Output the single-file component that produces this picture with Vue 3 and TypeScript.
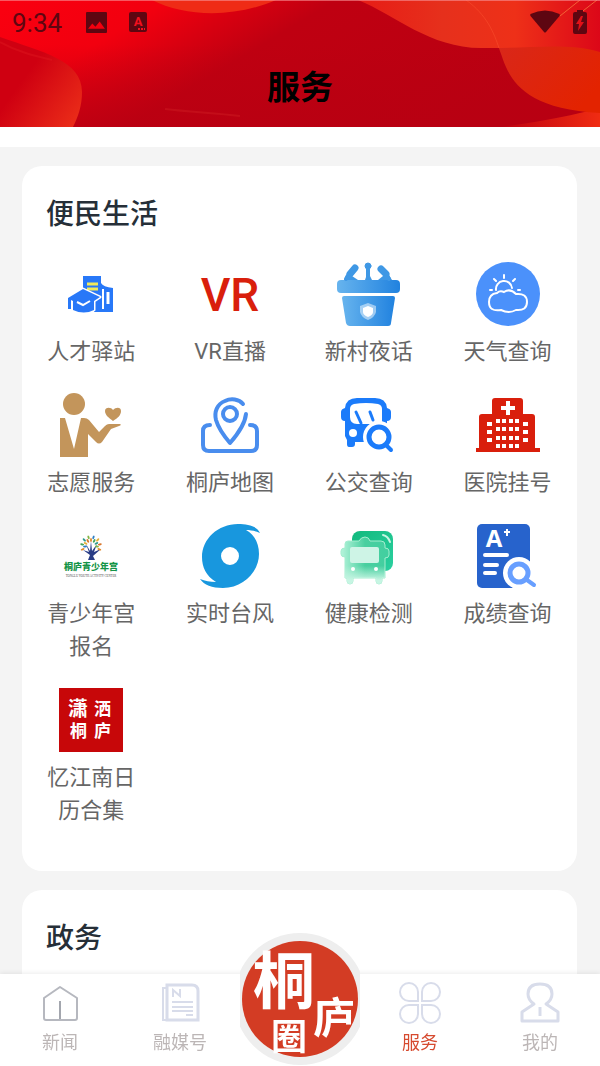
<script setup lang="ts">
interface Service { id: string; label: string }
interface Tab { id: string; label: string; active?: boolean }

const services: Service[] = [
  { id: 'talent', label: '人才驿站' },
  { id: 'vr', label: 'VR直播' },
  { id: 'podium', label: '新村夜话' },
  { id: 'weather', label: '天气查询' },
  { id: 'volunteer', label: '志愿服务' },
  { id: 'map', label: '桐庐地图' },
  { id: 'bus', label: '公交查询' },
  { id: 'hospital', label: '医院挂号' },
  { id: 'youth', label: '青少年宫报名' },
  { id: 'typhoon', label: '实时台风' },
  { id: 'health', label: '健康检测' },
  { id: 'grades', label: '成绩查询' },
  { id: 'calendar', label: '忆江南日历合集' },
]

const tabs: Tab[] = [
  { id: 'news', label: '新闻' },
  { id: 'media', label: '融媒号' },
  { id: 'circle', label: '' },
  { id: 'service', label: '服务', active: true },
  { id: 'me', label: '我的' },
]

const leafColors = ['#e08a2c', '#2f7fc4', '#46a35a', '#e5b03a', '#2f9a8c', '#d9772c', '#7fb544']
const leaves = Array.from({ length: 15 }, (_, i) => {
  const outer = i % 2 === 0
  const angle = Math.PI * (1.12 - (i / 14) * 1.24)
  const r = outer ? 9 : 6
  return {
    x: 32 + r * Math.cos(angle),
    y: 22 - r * Math.sin(angle),
    rot: 90 - (angle * 180) / Math.PI,
    fill: leafColors[i % leafColors.length],
  }
})

const centreWindows = [26, 34, 43, 51].flatMap((y) => [20, 26, 33, 39].map((x) => ({ x, y })))
const sideWindows = [29, 37, 45].flatMap((y) => [11, 47].map((x) => ({ x, y })))
</script>

<template>
  <div class="page">
    <header class="header">
      <svg class="header-art" viewBox="0 0 600 127" preserveAspectRatio="none" aria-hidden="true">
        <defs>
          <linearGradient id="base" x1="0" y1="0" x2="1" y2="0.35">
            <stop offset="0" stop-color="#fa0010" />
            <stop offset="0.25" stop-color="#f2000f" />
            <stop offset="0.5" stop-color="#bf0011" />
            <stop offset="1" stop-color="#b90012" />
          </linearGradient>
          <linearGradient id="shade" x1="0" y1="0" x2="0" y2="1">
            <stop offset="0.35" stop-color="#b80012" stop-opacity="0" />
            <stop offset="1" stop-color="#b80012" stop-opacity="0.7" />
          </linearGradient>
          <linearGradient id="blob" x1="0" y1="0" x2="1" y2="0.8">
            <stop offset="0.4" stop-color="#cf0011" />
            <stop offset="1" stop-color="#e92a18" />
          </linearGradient>
          <linearGradient id="wave" x1="0" y1="0" x2="1" y2="0">
            <stop offset="0" stop-color="#e71c16" />
            <stop offset="0.35" stop-color="#e6301c" />
            <stop offset="0.65" stop-color="#ee3018" />
            <stop offset="1" stop-color="#dc0718" />
          </linearGradient>
          <linearGradient id="fold" x1="0" y1="0" x2="1" y2="0.6">
            <stop offset="0" stop-color="#d9271a" />
            <stop offset="1" stop-color="#e32300" />
          </linearGradient>
          <linearGradient id="corner" x1="0" y1="0" x2="1" y2="0">
            <stop offset="0" stop-color="#bd0011" />
            <stop offset="1" stop-color="#f02c12" />
          </linearGradient>
        </defs>
        <rect width="600" height="127" fill="url(#base)" />
        <rect width="600" height="127" fill="url(#shade)" />
        <path d="M0 37C42 52 82 60 82 92C82 106 78 117 73 127H0Z" fill="url(#blob)" />
        <path d="M0 42C18 52 35 56 52 60" fill="none" stroke="#e01820" stroke-width="2" opacity=".4" />
        <path d="M152 0C185 17 235 18 276 0Z" fill="#ef2b16" />
        <path d="M165 109C190 112 215 113 240 116" fill="none" stroke="#d32025" stroke-width="2" opacity=".4" />
        <path d="M500 127C540 122 575 115 600 108V127Z" fill="url(#corner)" />
        <path d="M498 46C507 66 508 108 600 113V46Z" fill="url(#fold)" />
        <path d="M358 0C395 15 430 48 481 48C525 49 566 42 600 52V0Z" fill="url(#wave)" />
        <path d="M466 0C487 15 494 33 499 48" fill="none" stroke="#f6492a" opacity=".7" />
        <path d="M560 16L580 0M579 14L597 0" fill="none" stroke="#f98343" opacity=".7" />
        <rect width="600" height="1" fill="#f79298" opacity=".6" />
      </svg>
      <div class="status">
        <time class="clock">9:34</time>
        <svg class="st-image" viewBox="1 1 20 20" aria-hidden="true">
          <path fill-rule="evenodd" d="M2 1H20Q21 1 21 2V20Q21 21 20 21H2Q1 21 1 20V2Q1 1 2 1ZM3 17H19L14 10L10 15L7 12Z" />
        </svg>
        <svg class="st-lang" viewBox="0 0 22 22" aria-hidden="true">
          <rect x="2" y="1" width="18" height="20" rx="2" />
          <text x="11" y="15" text-anchor="middle" font-size="13">A</text>
          <path class="dots" d="M11 18H18" />
        </svg>
        <span class="spacer"></span>
        <svg class="st-wifi" viewBox="0 0 30 24" aria-hidden="true">
          <path d="M.5 4Q15-3 29.500 4Q30 5 29.500 6L16 22Q15 23 14 22L.5 6Q0 5 .5 4Z" />
        </svg>
        <svg class="st-battery" viewBox="0 0 16 24" aria-hidden="true">
          <path fill-rule="evenodd" d="M5 0H11V2H13Q15 2 15 4V22Q15 24 13 24H3Q1 24 1 22V4Q1 2 3 2H5ZM9 6L4 14H7L6 21L12 12H9L11 6Z" />
        </svg>
      </div>
      <h1 class="title">服务</h1>
    </header>

    <main class="content">
      <section class="card">
        <h2>便民生活</h2>
        <div class="grid">
          <button v-for="s in services" :key="s.id" type="button" class="service">
            <svg class="icon" viewBox="0 0 64 64" aria-hidden="true">
              <g v-if="s.id === 'talent'">
                <path d="M24 14H42V21Q44 25 54 26V50H35V40H24Z" fill="#2878f8" />
                <path d="M28 22H39M28 27H39" stroke="#f1e95b" stroke-width="3" />
                <path d="M44 27V47" stroke="#fff" stroke-width="2" />
                <path d="M49 30V42" stroke="#fff" stroke-width="3" />
                <path d="M9 36L24 27L41 35L35 39V48Q25 53 14 48V39L12 38V47H9Z" fill="#2878f8" stroke="#fff" stroke-width="3" paint-order="stroke" stroke-linejoin="round" />
                <path d="M18 40L24 43L31 39" fill="none" stroke="#fff" stroke-width="2" />
              </g>
              <text v-else-if="s.id === 'vr'" class="vr" x="32" y="49" text-anchor="middle">VR</text>
              <g v-else-if="s.id === 'podium'">
                <linearGradient id="pod" x1="0" x2="1"><stop stop-color="#67b4ee" /><stop offset="1" stop-color="#2182df" /></linearGradient>
                <rect y="18" width="63" height="13" rx="4" fill="url(#pod)" />
                <path d="M5 36Q5 34 7 34H56Q58 34 58 36L54 61Q54 64 51 64H13Q10 64 9 61Z" fill="url(#pod)" />
                <g fill="#3f98e5" stroke="#3f98e5" stroke-linecap="round">
                  <circle cx="31" cy="4" r="3" /><path d="M31 6V16" stroke-width="4" /><path d="M28 18L30 12H32L35 18Z" stroke="none" />
                  <path d="M18 6L13 12M44 7L49 12" stroke-width="7" />
                  <path d="M12 12L9 17M49 12L52 17" stroke-width="4" />
                  <path d="M7 18L9 13L15 14L21 18ZM41 18L46 14L52 13L55 18Z" stroke="none" />
                </g>
                <path d="M31 41L39 44V50Q38 55 31 58Q24 55 23 50V44Z" fill="#fff" opacity=".5" />
                <path d="M31 44L36 46V50Q36 53 31 55Q26 53 26 50V46Z" fill="#fff" />
              </g>
              <g v-else-if="s.id === 'weather'">
                <circle cx="32" cy="32" r="32" fill="#4b91fb" />
                <g fill="none" stroke="#fff" stroke-width="2" stroke-linecap="round">
                  <path d="M28 13V16M18 17L20 19M39 17L37 19M14 28H16M42 28H44M20 28A8 8 0 0 1 36 26" />
                  <path d="M21 31Q24 28 28 30Q34 26 40 32Q51 31 51 40Q51 49 40 48Q33 52 25 48Q13 50 13 40Q13 32 21 31Z" />
                </g>
              </g>
              <g v-else-if="s.id === 'volunteer'" fill="#c3955b">
                <circle cx="15" cy="11" r="11" />
                <path d="M1 25H6L15 56L22 25H25Q28 25 30 27L40 39L46 33Q48 31 50 31H61Q63 32 60 33L52 36L43 49Q40 52 37 49L29 41V64H1Z" />
                <path d="M54 28C50 25 46 22 46 18C46 14 52 14 54 17C57 14 62 14 62 18C62 22 59 25 54 28Z" />
              </g>
              <g v-else-if="s.id === 'map'" fill="none" stroke="#498dee" stroke-width="4" stroke-linecap="round">
                <path d="M45 11C41 6 33 5 27 8C19 11 16 19 18 27C20 34 26 43 32 50C39 42 47 31 48 21" stroke-linejoin="round" />
                <circle cx="32" cy="21" r="7" />
                <path d="M12 32Q5 32 5 38V52Q5 58 11 58H53Q59 58 59 52V38Q59 32 52 32" />
              </g>
              <g v-else-if="s.id === 'bus'">
                <path d="M8 15Q9 5 20 5H38Q49 5 50 15Q54 16 54 19V24Q54 28 50 28V49H18V51Q18 54 15 54H12Q10 54 10 51V47L8 43V28Q4 28 4 24V19Q4 16 8 15Z" fill="#1b7bfa" />
                <path d="M17 11Q29 9 41 11Q45 12 45 16V31H20Q13 31 13 24V16Q13 12 17 11Z" fill="#fff" />
                <path d="M19 19L24 30M33 19L36 27" stroke="#1b7bfa" stroke-width="3" stroke-linecap="round" />
                <circle cx="16" cy="40" r="4" fill="#fff" />
                <circle cx="42" cy="44" r="16" fill="#fff" />
                <circle cx="42" cy="44" r="10" fill="#fff" stroke="#1b7bfa" stroke-width="5" />
                <path d="M50 53L54 57" stroke="#1b7bfa" stroke-width="4" stroke-linecap="round" />
              </g>
              <g v-else-if="s.id === 'hospital'">
                <path d="M0 55H3V24Q3 21 6 21H16V8Q16 5 19 5H44Q47 5 47 8V21H56Q59 21 59 24V55H64V59H0Z" fill="#d91f0c" />
                <path d="M32 8V22M25 15H39" stroke="#fff" stroke-width="4" />
                <rect v-for="w in centreWindows" :key="`c${w.x}-${w.y}`" :x="w.x" :y="w.y" width="4" height="4" fill="#fff" />
                <rect v-for="w in sideWindows" :key="`s${w.x}-${w.y}`" :x="w.x" :y="w.y" width="5" height="4" fill="#fff" />
              </g>
              <g v-else-if="s.id === 'youth'">
                <path d="M29 36L31 31L24 26L30 28L27 20L31 27L32 17L33 27L38 20L35 28L42 25L34 32L36 36Z" fill="#283c86" />
                <ellipse v-for="(l, i) in leaves" :key="i" :cx="l.x" :cy="l.y" rx="1" ry="2" :fill="l.fill" :transform="`rotate(${l.rot} ${l.x} ${l.y})`" />
                <text class="youth-cn" x="32" y="46" text-anchor="middle">桐庐青少年宫</text>
                <text class="youth-en" x="32" y="53" text-anchor="middle">TONGLU YOUTH ACTIVITY CENTER</text>
              </g>
              <path v-else-if="s.id === 'typhoon'" fill="#1897de" fill-rule="evenodd" d="M40 0C50 0 59 2 62 9C57 7 53 6 48 6C57 11 61 20 61 30C61 48 45 64 25 64C14 64 6 61 2 55C7 57 12 58 18 58C8 52 4 43 4 33C4 15 20 0 40 0ZM32 23A9 9 0 1 0 32 41A9 9 0 0 0 32 23Z" />
              <g v-else-if="s.id === 'health'">
                <linearGradient id="hb" x1="0" x2="1" y1="0" y2="1"><stop stop-color="#12b97d" /><stop offset="1" stop-color="#2bd0a0" /></linearGradient>
                <linearGradient id="hf" x1="0" x2="1" y1="0" y2="0"><stop stop-color="#b5f4db" /><stop offset=".5" stop-color="#49cf9f" /><stop offset="1" stop-color="#42cfa0" /></linearGradient>
                <linearGradient id="hv" x1="0" x2="0" y1="0" y2="1"><stop offset=".3" stop-color="#c7f5e3" stop-opacity="0" /><stop offset=".85" stop-color="#c7f5e3" /></linearGradient>
                <rect x="15" y="7" width="41" height="40" rx="8" fill="url(#hb)" />
                <path d="M46 11Q51 12 53 18" fill="none" stroke="#c6f5e2" stroke-width="2" stroke-linecap="round" />
                <path d="M11 17H22Q24 13 28 13Q32 13 33 17H44Q48 17 48 21V24Q52 24 52 27V31Q52 34 48 34V54H45V57Q45 60 42 60Q39 60 39 57V54H16V57Q16 60 13 60Q10 60 10 57V54H8V33Q4 33 4 30V27Q4 24 8 24V20Q8 17 11 17Z" fill="url(#hf)" stroke="#a4edcf" />
                <path d="M8 34H48V54H45V57Q45 60 42 60Q39 60 39 57V54H16V57Q16 60 13 60Q10 60 10 57V54H8Z" fill="url(#hv)" />
                <rect x="13" y="23" width="29" height="16" rx="2" fill="#cef4e6" />
                <circle cx="16" cy="45" r="2" fill="#fff" /><circle cx="39" cy="45" r="2" fill="#fff" />
              </g>
              <g v-else-if="s.id === 'grades'">
                <rect x="1" width="53" height="64" rx="5" fill="#2763cc" />
                <text class="grade" x="18" y="23" text-anchor="middle">A</text>
                <path d="M31 5V12M28 8H34" stroke="#fff" stroke-width="2" />
                <path d="M9 31H31M9 41H21M9 49H19" stroke="#fff" stroke-width="4" stroke-linecap="round" />
                <circle cx="43" cy="49" r="16" fill="#fff" />
                <path d="M43 57L54 47V64H36Z" fill="#fff" />
                <circle cx="43" cy="49" r="9" fill="#fff" stroke="#689fff" stroke-width="5" />
                <path d="M51 56L58 61" stroke="#689fff" stroke-width="4" stroke-linecap="round" />
              </g>
              <g v-else>
                <rect width="64" height="64" fill="#c70709" />
                <g class="brush">
                  <text x="9" y="28" font-size="20">潇</text><text x="35" y="27" font-size="17">洒</text>
                  <text x="11" y="49" font-size="17">桐</text><text x="35" y="49" font-size="17">庐</text>
                </g>
              </g>
            </svg>
            <span class="label">{{ s.label }}</span>
          </button>
        </div>
      </section>

      <section class="card rest">
        <h2>政务</h2>
      </section>
    </main>

    <nav class="tabs" aria-label="主导航">
      <a v-for="t in tabs" :key="t.id" href="#" class="tab" :class="{ active: t.active }" :aria-label="t.label || '桐庐圈'">
        <svg v-if="t.id === 'circle'" class="circle-logo" viewBox="0 0 120 134" aria-hidden="true">
          <circle cx="60" cy="67" r="66" fill="#eeeeee" />
          <circle cx="60" cy="67" r="58" fill="#d33c24" />
          <g class="brush">
            <text x="13" y="72" font-size="62">桐</text>
            <text x="73" y="101" font-size="42">庐</text>
            <text x="31" y="118" font-size="36">圈</text>
          </g>
        </svg>
        <template v-else>
          <svg class="tab-icon" viewBox="0 0 42 42" aria-hidden="true">
            <g v-if="t.id === 'news'" fill="none" stroke="#b6b8bf" stroke-width="2" stroke-linejoin="round">
              <path d="M5 16L21 5L38 16V36Q38 38 36 38H7Q5 38 5 36Z" /><path d="M21 19V37" stroke="#a3a6ae" />
            </g>
            <g v-else-if="t.id === 'media'" fill="none" stroke="#d8dcea" stroke-width="2">
              <path d="M8 3H33Q39 3 39 9V38H8Z" stroke-width="3" /><path d="M8 6H4V38H8" />
              <path d="M13 20H34M13 25H34M13 29H34M27 33H34" /><path d="M14 15V8L21 14V7" />
            </g>
            <g v-else-if="t.id === 'service'" fill="none" stroke="#d8dcea" stroke-width="2">
              <path d="M19 19H10A9 9 0 1 1 19 10ZM23 19H32A9 9 0 1 0 23 10ZM19 23H10A9 9 0 1 0 19 32ZM23 23H32A9 9 0 1 1 23 32Z" />
            </g>
            <g v-else fill="none" stroke="#d8dcea" stroke-width="3" stroke-linejoin="round">
              <path d="M15 22Q9 18 9 12Q9 2 21 2Q33 2 33 12Q33 18 27 22L39 30V39H3V30Z" /><path d="M21 25V34" />
            </g>
          </svg>
          <span>{{ t.label }}</span>
        </template>
      </a>
    </nav>
  </div>
</template>

<style>
body { margin: 0; background: #f4f4f4; }
</style>

<style scoped>
.page {
  min-height: 100vh;
  display: flex;
  flex-direction: column;
  font-family: Roboto, "Noto Sans CJK SC", sans-serif;
}
.header { position: relative; height: 127px; }
.header-art { position: absolute; inset: 0; width: 100%; height: 100%; }
.status {
  position: relative;
  height: 44px;
  padding: 0 12px;
  display: flex;
  align-items: center;
  color: #5e0611;
  fill: #5e0611;
}
.clock { font-size: 26px; line-height: 44px; padding-top: 2px; }
.st-image { width: 21px; height: 21px; margin-left: 24px; }
.st-lang { width: 22px; height: 22px; margin-left: 20px; }
.st-lang text { fill: #f5101e; font-weight: 700; }
.dots { stroke: #f5101e; stroke-width: 2; stroke-dasharray: 2 1; }
.spacer { flex: 1; }
.st-wifi { width: 30px; height: 24px; }
.st-battery { width: 16px; height: 24px; margin-left: 12px; }
.title {
  position: relative;
  margin: 17px 0 0;
  text-align: center;
  font: 700 33px/48px "Noto Sans CJK SC", sans-serif;
  color: #000;
}
.content {
  flex: 1;
  display: flex;
  flex-direction: column;
  gap: 19px;
  padding: 19px 23px 0 22px;
  border-top: 20px solid #fff;
  background: #f4f4f4;
}
.card { padding: 26px 0 19px; border-radius: 20px; background: #fff; }
.rest { flex: 1; }
h2 {
  margin: 0 24px;
  font: 500 28px/40px "Noto Sans CJK SC", sans-serif;
  color: #262f38;
}
.grid { display: grid; grid-template-columns: repeat(4, 1fr); margin-top: 30px; }
.service {
  display: flex;
  flex-direction: column;
  align-items: center;
  justify-content: flex-start;
  gap: 9px;
  padding: 0 0 25px;
  border: 0;
  background: none;
  font: inherit;
  color: #666;
  cursor: pointer;
}
.icon { width: 64px; height: 64px; overflow: visible; }
.label { max-width: 100px; font-size: 22px; line-height: 33px; }
.vr { font: 500 46px Roboto, sans-serif; fill: #d91f0c; }
.youth-cn { font: 900 9px "Noto Sans CJK SC", sans-serif; fill: #149447; }
.youth-en { font: 3px "Liberation Serif", serif; fill: #444; }
.grade { font: 700 24px "Open Sans", sans-serif; fill: #fff; }
.brush { fill: #fff; font-family: "Noto Sans CJK SC", sans-serif; font-weight: 700; }
.tabs {
  position: fixed;
  inset: auto 0 0;
  display: grid;
  grid-template-columns: repeat(5, 1fr);
  height: 92px;
  background: #fff;
  box-shadow: 0 -1px 5px rgba(0, 0, 0, 0.08);
}
.tab {
  position: relative;
  display: flex;
  flex-direction: column;
  align-items: center;
  gap: 7px;
  padding-top: 8px;
  font-size: 18px;
  line-height: 24px;
  color: #bcb6b6;
  text-decoration: none;
}
.active { color: #d64a2f; }
.tab-icon { width: 42px; height: 42px; }
.circle-logo { position: absolute; left: 50%; bottom: 0; width: 120px; height: 134px; margin-left: -60px; }
</style>
